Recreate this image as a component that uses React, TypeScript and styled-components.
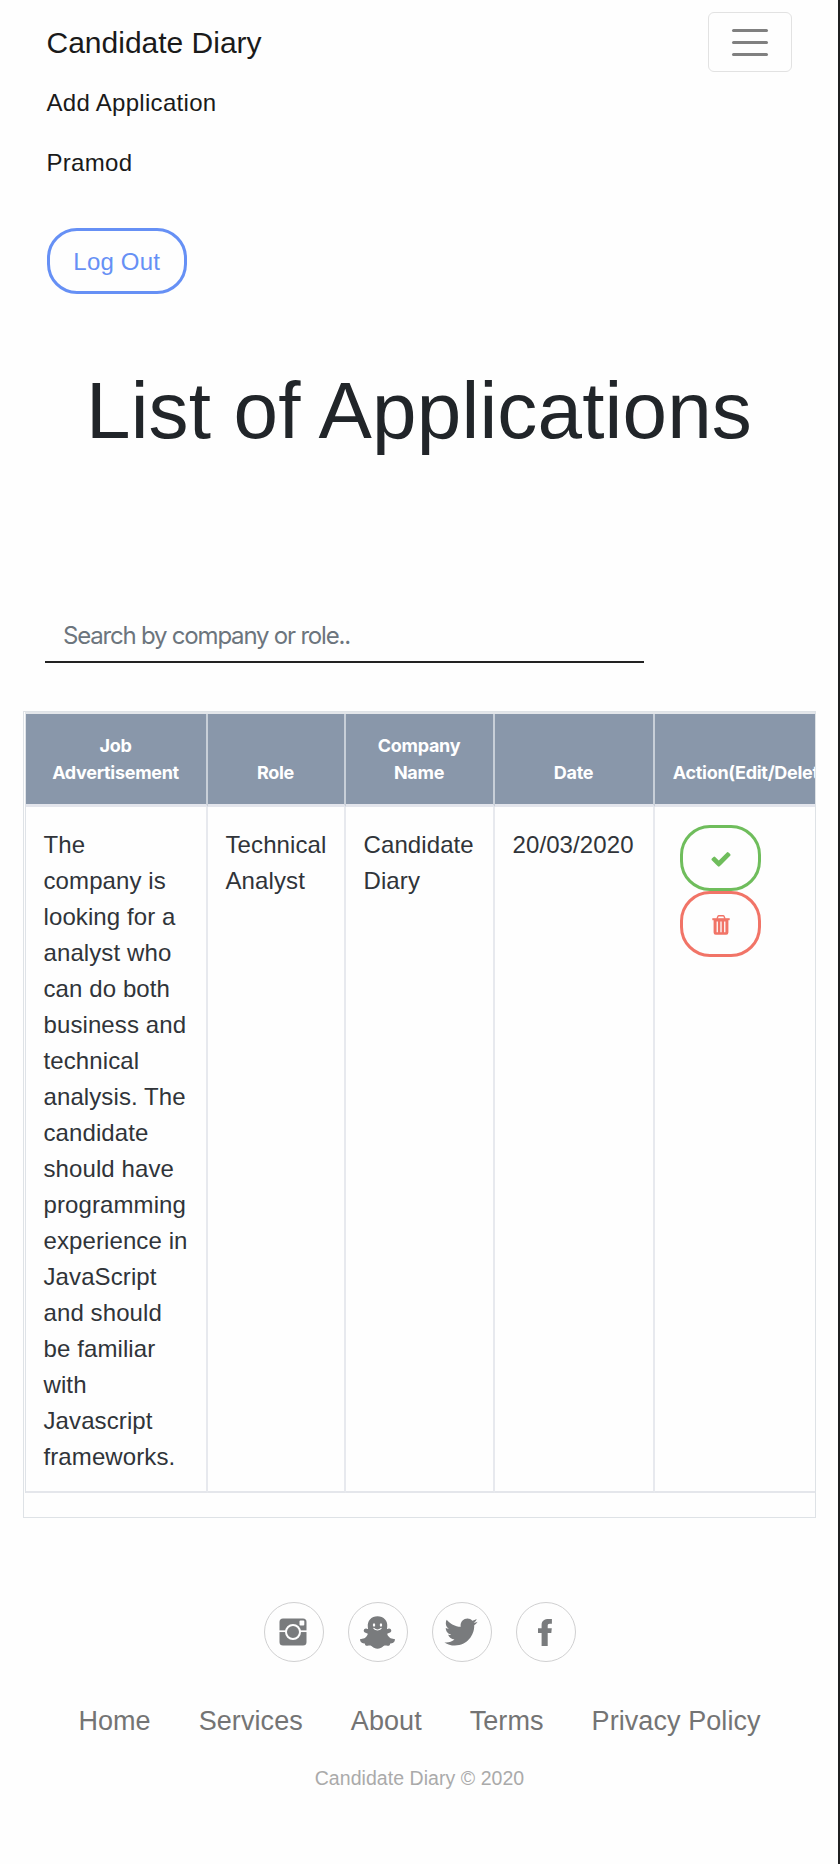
import React from 'react';
import styled, { createGlobalStyle } from 'styled-components';
import { IoLogoSnapchat, IoLogoTwitter } from 'react-icons/io';

const GlobalStyle = createGlobalStyle`
  * { box-sizing: border-box; }
  html, body { margin: 0; padding: 0; }
  body {
    background: #fefefe;
    color: #212529;
    font-family: "Liberation Sans", Arial, sans-serif;
    font-size: 24px;
    line-height: 36px;
  }
`;

const Page = styled.div`
  width: 840px;
  height: 1864px;
  overflow: hidden;
  border-right: 2px solid #1f2021;
`;

const Navbar = styled.nav`
  padding: 12px 46px 0 46.5px;
  color: #1a1a1a;
`;

const NavTop = styled.div`
  display: flex;
  align-items: center;
  justify-content: space-between;
  height: 60px;
`;

const Brand = styled.a`
  font-size: 30px;
  line-height: 45px;
`;

const Toggler = styled.button`
  display: flex;
  flex-direction: column;
  align-items: center;
  justify-content: center;
  gap: 9px;
  width: 84px;
  height: 60px;
  padding: 0;
  background: transparent;
  border: 1px solid #e2e2e2;
  border-radius: 6px;
`;

const TogglerBar = styled.span`
  width: 36px;
  height: 3px;
  border-radius: 1.5px;
  background: #808080;
`;

const NavItem = styled.a`
  display: block;
  padding: 13px 0 11px;
  letter-spacing: 0.3px;
`;

const PillButton = styled.button<{ $color: string; $width: number }>`
  display: flex;
  align-items: center;
  justify-content: center;
  width: ${(p) => p.$width}px;
  height: 66px;
  padding: 2px 0 0;
  color: ${(p) => p.$color};
  background: transparent;
  border: 3px solid ${(p) => p.$color};
  border-radius: 30px;
  font: inherit;
  letter-spacing: 0.2px;
`;

const LogoutRow = styled.div`
  padding-top: 36px;
`;

const Title = styled.h1`
  margin: 69px 0 0;
  font-size: 80px;
  font-weight: 400;
  line-height: 96px;
  letter-spacing: 0.17px;
  text-align: center;
`;

const Search = styled.input`
  display: block;
  width: 599px;
  height: 57px;
  margin: 147px 0 0 45px;
  padding: 4px 18px 0;
  border: 0;
  border-bottom: 2px solid #222;
  background: transparent;
  font-family: Inter, sans-serif;
  font-size: 24px;
  letter-spacing: -1.2px;
  &::placeholder { color: #6c757d; opacity: 1; }
`;

const TableFrame = styled.div`
  width: 793px;
  height: 807px;
  margin: 48px 0 0 23px;
  padding: 0 0 0 1px;
  overflow: hidden;
  border: 1px solid #dee2e6;
`;

const Table = styled.table`
  width: 831px;
  table-layout: fixed;
  border-collapse: separate;
  border-spacing: 0;
  border-top: 2px solid #e3e6ea;
  border-left: 1px solid #dfe3e8;
`;

const HeadCell = styled.th`
  height: 93px;
  padding: 18px 17px 18px 16px;
  background: #8997aa;
  border-right: 2px solid #c8cfd8;
  border-bottom: 3px solid #e3e5ec;
  color: #fff;
  font-family: Inter, sans-serif;
  font-size: 18px;
  font-weight: 700;
  line-height: 27px;
  text-align: center;
  vertical-align: bottom;
  letter-spacing: -0.3px;
`;

const Cell = styled.td`
  height: 686px;
  padding: 20px 18px 0 17.5px;
  border-right: 2px solid #e7e9ee;
  border-bottom: 2px solid #e4e6eb;
  color: #303439;
  vertical-align: top;
  letter-spacing: 0.1px;
`;

const Actions = styled.div`
  display: flex;
  flex-direction: column;
  margin-top: -2px;
  padding-left: 7.5px;
`;

const Footer = styled.footer`
  display: flex;
  flex-direction: column;
  align-items: center;
  padding: 84px 0 0 1px;
`;

const Socials = styled.div`
  display: flex;
  gap: 24px;
  padding-left: 1px;
`;

const SocialLink = styled.a`
  display: flex;
  align-items: center;
  justify-content: center;
  width: 60px;
  height: 60px;
  padding-right: 2px;
  border: 1px solid #d0d0d1;
  border-radius: 50%;
  color: #797b7d;
`;

const FooterLinks = styled.div`
  display: flex;
  gap: 48px;
  margin-top: 39px;
  color: #747474;
  font-size: 27px;
  line-height: 40px;
  letter-spacing: 0.07px;
`;

const Copyright = styled.p`
  margin: 23px 0 0;
  color: #aaaaaa;
  font-size: 19.5px;
  line-height: 29px;
  letter-spacing: 0.05px;
`;

const CheckIcon = () => (
  <svg width="22" height="22" viewBox="0 0 1792 1792" fill="currentColor">
    <path d="M1671 566q0 40-28 68l-724 724-136 136q-28 28-68 28t-68-28l-136-136-362-362q-28-28-28-68t28-68l136-136q28-28 68-28t68 28l294 295 656-657q28-28 68-28t68 28l136 136q28 28 28 68z" />
  </svg>
);

const TrashIcon = () => (
  <svg width="18" height="20" viewBox="0 0 18 20" fill="none" stroke="currentColor">
    <path d="M0.3 4.2h17.4" strokeWidth="2" />
    <path d="M5 3.8 6.1 1.1q.2-.4.7-.4h4.4q.5 0 .7.4L13 3.8" strokeWidth="1.4" />
    <path
      d="M1.6 4.5h14.8v13q0 2.3-2.1 2.3H3.7q-2.1 0-2.1-2.3zM4.6 6.6v10.6h1.3V6.6zM8.35 6.6v10.6h1.3V6.6zM12.1 6.6v10.6h1.3V6.6z"
      fill="currentColor"
      fillRule="evenodd"
      stroke="none"
    />
  </svg>
);

const InstagramIcon = () => (
  <svg width="28" height="28" viewBox="0 0 28 28">
    <rect x="0.5" y="0.5" width="27" height="27" rx="3.5" fill="currentColor" />
    <path d="M0 13.2h28" stroke="#fefefe" strokeWidth="1.7" />
    <circle cx="14" cy="14" r="7" fill="currentColor" stroke="#fefefe" strokeWidth="2" />
    <rect x="20.5" y="2.6" width="4.8" height="4.8" rx="1" fill="#fefefe" />
  </svg>
);

const FacebookIcon = () => (
  <svg width="14" height="27" viewBox="0 0 14 27" fill="currentColor">
    <path d="M9.7 27V13.9h3.6l.5-4.7H9.7V6.9c0-1.3.4-2.1 2.1-2.1h2.1V.1C13.4 0 12.2 0 10.9 0 6.4 0 3.6 1.8 3.6 6v3.2H0v4.7h3.6V27z" />
  </svg>
);

const COLUMNS = [
  { label: 'Job Advertisement', width: 182 },
  { label: 'Role', width: 138 },
  { label: 'Company Name', width: 149 },
  { label: 'Date', width: 160 },
  { label: 'Action(Edit/Delete)', width: 201 },
];

export default function App() {
  return (
    <Page>
      <GlobalStyle />
      <Navbar>
        <NavTop>
          <Brand>Candidate Diary</Brand>
          <Toggler aria-label="Toggle navigation">
            <TogglerBar />
            <TogglerBar />
            <TogglerBar />
          </Toggler>
        </NavTop>
        <NavItem>Add Application</NavItem>
        <NavItem>Pramod</NavItem>
        <LogoutRow>
          <PillButton $color="#6690f5" $width={140.5}>Log Out</PillButton>
        </LogoutRow>
      </Navbar>
      <Title>List of Applications</Title>
      <Search placeholder="Search by company or role.." />
      <TableFrame>
        <Table>
          <colgroup>
            {COLUMNS.map((c) => <col key={c.label} width={c.width} />)}
          </colgroup>
          <thead>
            <tr>
              {COLUMNS.map((c) => <HeadCell key={c.label}>{c.label}</HeadCell>)}
            </tr>
          </thead>
          <tbody>
            <tr>
              <Cell>
                The company is looking for a analyst who can do both business and technical
                analysis. The candidate should have programming experience in JavaScript and
                should be familiar with Javascript frameworks.
              </Cell>
              <Cell>Technical Analyst</Cell>
              <Cell>Candidate Diary</Cell>
              <Cell>20/03/2020</Cell>
              <Cell>
                <Actions>
                  <PillButton $color="#6fbd5c" $width={81} aria-label="Edit"><CheckIcon /></PillButton>
                  <PillButton $color="#f17467" $width={81} aria-label="Delete"><TrashIcon /></PillButton>
                </Actions>
              </Cell>
            </tr>
          </tbody>
        </Table>
      </TableFrame>
      <Footer>
        <Socials>
          <SocialLink><InstagramIcon /></SocialLink>
          <SocialLink><IoLogoSnapchat size={37} /></SocialLink>
          <SocialLink><IoLogoTwitter size={36} /></SocialLink>
          <SocialLink><FacebookIcon /></SocialLink>
        </Socials>
        <FooterLinks>
          <span>Home</span>
          <span>Services</span>
          <span>About</span>
          <span>Terms</span>
          <span>Privacy Policy</span>
        </FooterLinks>
        <Copyright>Candidate Diary © 2020</Copyright>
      </Footer>
    </Page>
  );
}
